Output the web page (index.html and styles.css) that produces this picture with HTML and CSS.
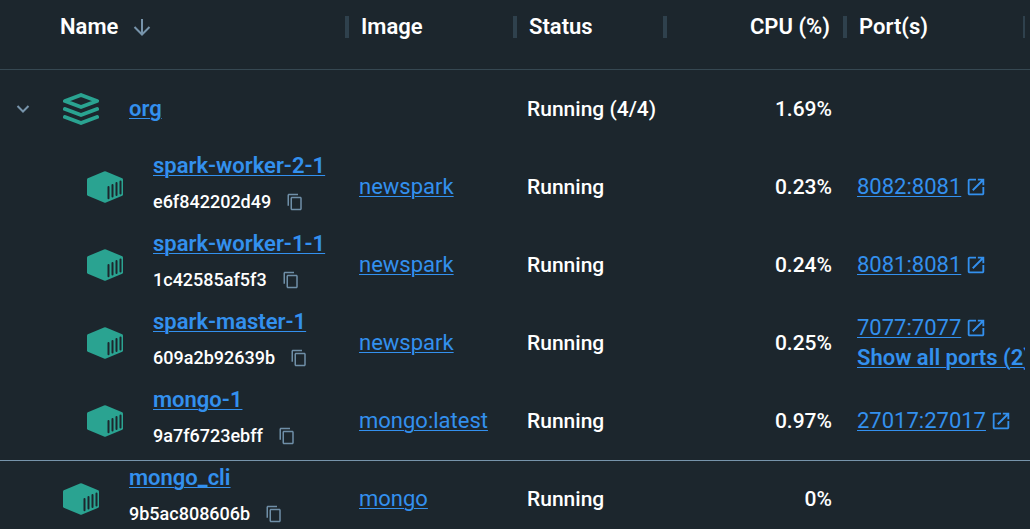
FILE: index.html
```html
<!DOCTYPE html>
<html lang="en">
<head>
<meta charset="utf-8">
<meta name="viewport" content="width=device-width, initial-scale=1">
<title>Containers</title>
<link rel="stylesheet" href="styles.css">
</head>
<body>
<svg class="sprite" aria-hidden="true">
  <symbol id="i-container" viewBox="0 0 36 32">
    <path fill="#2aa391" d="M17 .4Q18 0 19 .4L35.200 7.200Q36 7.600 36 8.500V23.500Q36 24.400 35.200 24.800L19 31.600Q18 32 17 31.600L.8 24.800Q0 24.400 0 23.500V8.500Q0 7.600.8 7.200Z"/>
    <path stroke="#1c262d" stroke-width="2" stroke-linecap="round" d="M21.500 16V27.200M25.500 14V25.600M29.500 12V24M33.500 10.600V22.400"/>
  </symbol>
  <symbol id="i-stack" viewBox="0 0 36 32">
    <g fill="none" stroke="#2aa391" stroke-width="4" stroke-linecap="round" stroke-linejoin="round">
      <path d="M2 8L18 2L34 8L18 14Z"/>
      <path d="M2 16L18 22L34 16M2 24L18 30L34 24"/>
    </g>
  </symbol>
  <symbol id="i-copy" viewBox="0 0 24 24">
    <path fill="#6f8fa8" d="M16 1H4c-1.100 0-2 .9-2 2v14h2V3h12V1zm3 4H8c-1.100 0-2 .9-2 2v14c0 1.100.9 2 2 2h11c1.100 0 2-.9 2-2V7c0-1.100-.9-2-2-2zm0 16H8V7h11v14z"/>
  </symbol>
  <symbol id="i-open" viewBox="0 0 24 24">
    <path fill="#3390ee" d="M19 19H5V5h7V3H5c-1.100 0-2 .9-2 2v14c0 1.100.9 2 2 2h14c1.100 0 2-.9 2-2v-7h-2v7zM14 3v2h3.590l-9.830 9.830 1.410 1.410L19 6.410V10h2V3h-7z"/>
  </symbol>
</svg>
<main class="panel">
<table class="grid">
  <colgroup><col><col class="c-image"><col class="c-status"><col class="c-cpu"><col class="c-ports"><col class="c-end"></colgroup>
  <thead>
    <tr>
      <th scope="col" class="head-name"><button class="sort" type="button">Name <svg width="24" height="24" viewBox="0 0 24 24" aria-hidden="true"><path fill="none" stroke="#7794ab" stroke-width="2" d="M12 4V19M4.500 12L12 19.500L19.500 12"/></svg></button></th>
      <th scope="col">Image</th>
      <th scope="col">Status</th>
      <th scope="col" class="num">CPU (%)</th>
      <th scope="col">Port(s)</th>
      <td></td>
    </tr>
  </thead>
  <tbody>
    <tr>
      <td><div class="name"><button class="toggle" type="button" aria-label="Collapse org" aria-expanded="true"><svg width="14" height="10" viewBox="0 0 14 10"><path fill="none" stroke="#7794ab" stroke-width="2" d="M1.500 2L7 7.500L12.500 2"/></svg></button><svg class="kind"><use href="#i-stack"/></svg><a class="title" href="#">org</a></div></td>
      <td></td><td>Running (4/4)</td><td class="num">1.69%</td><td></td><td></td>
    </tr>
    <tr>
      <td><div class="name child"><svg class="kind"><use href="#i-container"/></svg><div class="ident"><a class="title" href="#">spark-worker-2-1</a><div class="hash">e6f842202d49<button type="button" aria-label="Copy ID"><svg class="copy"><use href="#i-copy"/></svg></button></div></div></div></td>
      <td><a href="#">newspark</a></td><td>Running</td><td class="num">0.23%</td>
      <td><div class="port"><a href="#">8082:8081</a><svg class="open"><use href="#i-open"/></svg></div></td><td></td>
    </tr>
    <tr>
      <td><div class="name child"><svg class="kind"><use href="#i-container"/></svg><div class="ident"><a class="title" href="#">spark-worker-1-1</a><div class="hash">1c42585af5f3<button type="button" aria-label="Copy ID"><svg class="copy"><use href="#i-copy"/></svg></button></div></div></div></td>
      <td><a href="#">newspark</a></td><td>Running</td><td class="num">0.24%</td>
      <td><div class="port"><a href="#">8081:8081</a><svg class="open"><use href="#i-open"/></svg></div></td><td></td>
    </tr>
    <tr>
      <td><div class="name child"><svg class="kind"><use href="#i-container"/></svg><div class="ident"><a class="title" href="#">spark-master-1</a><div class="hash">609a2b92639b<button type="button" aria-label="Copy ID"><svg class="copy"><use href="#i-copy"/></svg></button></div></div></div></td>
      <td><a href="#">newspark</a></td><td>Running</td><td class="num">0.25%</td>
      <td class="ports"><div class="port"><a href="#">7077:7077</a><svg class="open"><use href="#i-open"/></svg></div><a class="more" href="#">Show all ports (2)</a></td><td></td>
    </tr>
    <tr>
      <td><div class="name child"><svg class="kind"><use href="#i-container"/></svg><div class="ident"><a class="title" href="#">mongo-1</a><div class="hash">9a7f6723ebff<button type="button" aria-label="Copy ID"><svg class="copy"><use href="#i-copy"/></svg></button></div></div></div></td>
      <td><a href="#">mongo:latest</a></td><td>Running</td><td class="num">0.97%</td>
      <td><div class="port"><a href="#">27017:27017</a><svg class="open"><use href="#i-open"/></svg></div></td><td></td>
    </tr>
    <tr class="split">
      <td><div class="name root"><svg class="kind"><use href="#i-container"/></svg><div class="ident"><a class="title" href="#">mongo_cli</a><div class="hash">9b5ac808606b<button type="button" aria-label="Copy ID"><svg class="copy"><use href="#i-copy"/></svg></button></div></div></div></td>
      <td><a href="#">mongo</a></td><td>Running</td><td class="num">0%</td><td></td><td></td>
    </tr>
  </tbody>
</table>
</main>
</body>
</html>
```
FILE: styles.css
```css
* { box-sizing: border-box; }
body {
  margin: 0;
  background: #1c262d;
  color: #fff;
  font: 500 21px/30px Roboto, sans-serif;
}
.sprite { display: none; }
.panel { height: 100vh; overflow: hidden; }
svg { display: block; flex: none; }
a {
  color: #3390ee;
  font-weight: 400;
  font-size: 22px;
  text-decoration-thickness: 1px;
  text-underline-offset: 2px;
}
button {
  padding: 0;
  border: 0;
  background: none;
  color: inherit;
  font: inherit;
  cursor: pointer;
}

.grid {
  width: 100%;
  table-layout: fixed;
  border-collapse: separate;
  border-spacing: 0;
}
.c-image { width: 168px; }
.c-status { width: 150px; }
.c-cpu { width: 180px; }
.c-ports { width: 180px; }
.c-end { width: 5px; }

.grid th, .grid td { padding: 0; text-align: left; white-space: nowrap; }
.grid thead th, .grid thead td {
  height: 70px;
  padding-bottom: 16px;
  border-bottom: 1px solid #364852;
}
.grid th {
  padding-left: 14px;
  font-size: 22px;
  font-weight: 600;
  background: linear-gradient(#2f414d, #2f414d) right 16px / 2px 22px no-repeat;
}
.grid th:not(:first-child) {
  background:
    linear-gradient(#2f414d, #2f414d) left top 16px / 2px 22px no-repeat,
    linear-gradient(#2f414d, #2f414d) right top 16px / 2px 22px no-repeat;
}
.grid th.head-name { padding-left: 60px; background-position: right top 16px; }
.grid th.num { padding-right: 15px; }
.sort { display: flex; align-items: center; gap: 12px; }

.grid tbody td { height: 78px; padding-left: 12px; }
.grid tbody td:first-child { padding-left: 0; }
.grid tbody td:last-child { padding-left: 0; }
.grid .num { text-align: right; }
.grid tbody .num { padding-right: 13px; }
.split td { box-shadow: inset 0 1px #7794ab; }

.name { display: flex; align-items: center; }
.child { padding-left: 87px; }
.root { padding-left: 63px; }
.toggle { display: flex; justify-content: center; width: 46px; margin-right: 17px; }
.kind { width: 36px; height: 32px; margin-right: 30px; }
.title, .more { font-weight: 600; }
.ident { padding-bottom: 6px; line-height: 36px; }
.hash { display: flex; align-items: center; gap: 15px; font-size: 18px; }
.copy { width: 18px; height: 18px; }

.port { display: flex; align-items: center; gap: 4px; }
.open { width: 22px; height: 22px; }
.grid td.ports { overflow: hidden; }
```
